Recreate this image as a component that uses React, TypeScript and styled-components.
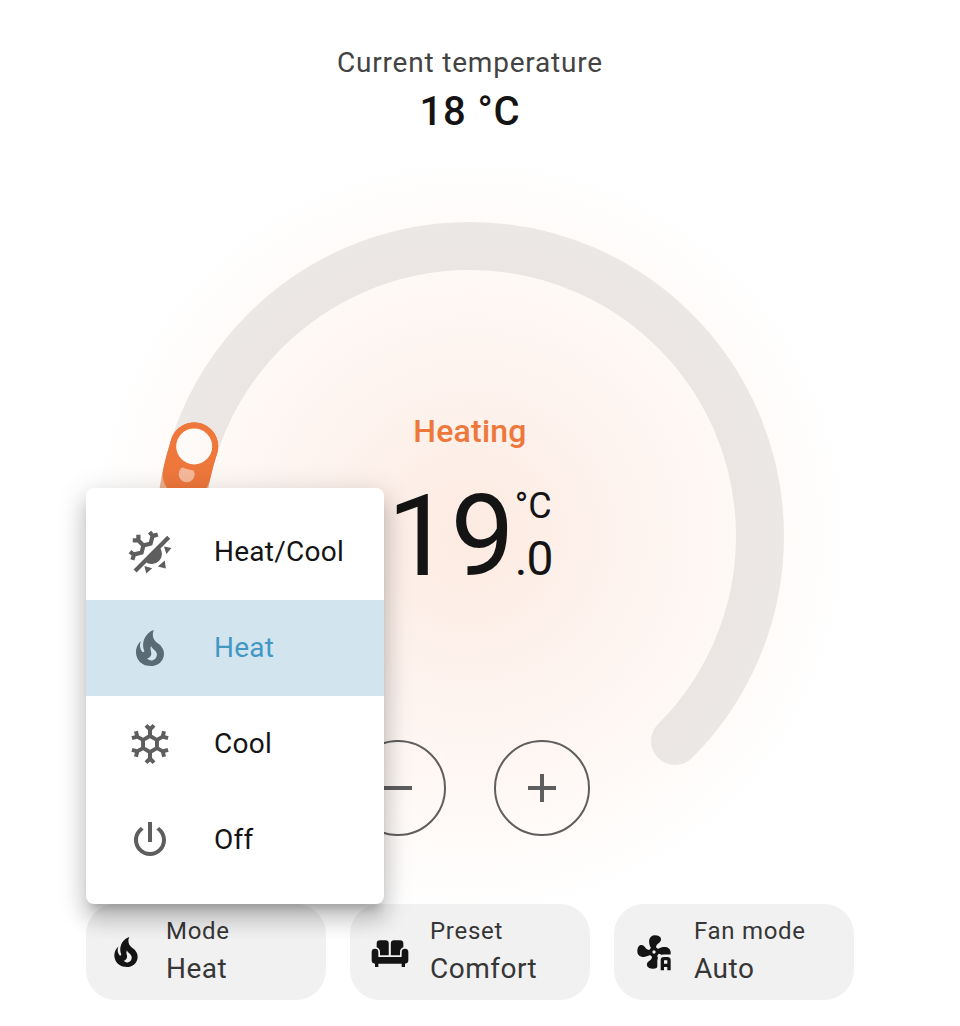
import React from "react";
import styled, { createGlobalStyle, css } from "styled-components";

const GlobalStyle = createGlobalStyle`
  * { box-sizing: border-box; }
  body {
    margin: 0;
    background: #fff;
    font-family: Roboto, "Liberation Sans", sans-serif;
    color: #141414;
    overflow: hidden;
  }
`;

const icons = {
  fire: "M17.66 11.2C17.43 10.9 17.15 10.64 16.89 10.38C16.22 9.78 15.46 9.35 14.82 8.72C13.33 7.26 13 4.85 13.95 3C13 3.23 12.17 3.75 11.46 4.32C8.87 6.4 7.85 10.07 9.07 13.22C9.11 13.32 9.15 13.42 9.15 13.55C9.15 13.77 9 13.97 8.8 14.05C8.57 14.15 8.33 14.09 8.14 13.93C8.08 13.88 8.04 13.83 8 13.76C6.87 12.33 6.69 10.28 7.45 8.64C5.78 10 4.87 12.3 5 14.47C5.06 14.97 5.12 15.47 5.29 15.97C5.43 16.57 5.7 17.17 6 17.7C7.08 19.43 8.95 20.67 10.96 20.92C13.1 21.19 15.39 20.8 17.03 19.32C18.86 17.66 19.5 15 18.56 12.72L18.43 12.46C18.22 12 17.66 11.2 17.66 11.2M14.5 17.5C14.22 17.74 13.76 18 13.4 18.1C12.28 18.5 11.16 17.94 10.5 17.28C11.69 17 12.4 16.12 12.61 15.23C12.78 14.43 12.46 13.77 12.33 13C12.21 12.26 12.23 11.63 12.5 10.94C12.69 11.32 12.89 11.7 13.13 12C13.9 13 15.11 13.44 15.37 14.8C15.41 14.94 15.43 15.08 15.43 15.23C15.46 16.05 15.1 16.95 14.5 17.5Z",
  snowflake:
    "M20.79,13.95L18.46,14.57L16.46,13.44V10.56L18.46,9.43L20.79,10.05L21.31,8.12L19.54,7.65L20,5.88L18.07,5.36L17.45,7.69L15.45,8.82L13,7.38V5.12L14.71,3.41L13.29,2L12,3.29L10.71,2L9.29,3.41L11,5.12V7.38L8.5,8.82L6.5,7.69L5.92,5.36L4,5.88L4.47,7.65L2.7,8.12L3.22,10.05L5.55,9.43L7.55,10.56V13.45L5.55,14.58L3.22,13.96L2.7,15.89L4.47,16.36L4,18.12L5.93,18.64L6.55,16.31L8.55,15.18L11,16.62V18.88L9.29,20.59L10.71,22L12,20.71L13.29,22L14.7,20.59L13,18.88V16.62L15.5,15.17L17.5,16.3L18.12,18.63L20,18.12L19.53,16.35L21.3,15.88L20.79,13.95M9.5,10.56L12,9.11L14.5,10.56V13.44L12,14.89L9.5,13.44V10.56Z",
  power:
    "M16.56,5.44L15.11,6.89C16.84,7.94 18,9.83 18,12A6,6 0 0,1 12,18A6,6 0 0,1 6,12C6,9.83 7.16,7.94 8.88,6.88L7.44,5.44C5.36,6.88 4,9.28 4,12A8,8 0 0,0 12,20A8,8 0 0,0 20,12C20,9.28 18.64,6.88 16.56,5.44M13,3H11V13H13",
  sofa: "M6 5H9.25A2 2 0 0 1 11.25 7V14H6V12C6 10.5 5.2 9.5 4 9.1V7A2 2 0 0 1 6 5ZM18 5H14.5A2 2 0 0 0 12.5 7V14H18V12C18 10.5 18.8 9.5 20 9.1V7A2 2 0 0 0 18 5ZM3 10A2 2 0 0 1 5 12V15H19V12A2 2 0 0 1 23 12V17A2 2 0 0 1 21 19V21H19V19H5V21H3V19A2 2 0 0 1 1 17V12A2 2 0 0 1 3 10Z",
  fan: "M12,11A1,1 0 0,0 11,12A1,1 0 0,0 12,13A1,1 0 0,0 13,12A1,1 0 0,0 12,11M12.5,2C17,2 17.11,5.57 14.75,6.75C13.76,7.24 13.32,8.29 13.13,9.22C13.61,9.42 14.03,9.73 14.35,10.13C18.05,8.13 22.03,8.92 22.03,12.5C22.03,17 18.46,17.1 17.28,14.73C16.78,13.74 15.72,13.3 14.79,13.11C14.59,13.59 14.28,14 13.88,14.34C15.87,18.03 15.08,22 11.5,22C7,22 6.91,18.42 9.27,17.24C10.25,16.75 10.69,15.71 10.89,14.79C10.4,14.59 9.97,14.27 9.65,13.87C5.96,15.85 2,15.07 2,11.5C2,7 5.56,6.89 6.74,9.26C7.24,10.25 8.29,10.68 9.22,10.87C9.41,10.39 9.73,9.97 10.14,9.65C8.15,5.96 8.94,2 12.5,2Z",
  autoBadge:
    "M18 15H20A2 2 0 0 1 22 17V23H20V21H18V23H16V17A2 2 0 0 1 18 15M18 17V19H20V17H18Z",
  plus: "M19,13H13V19H11V13H5V11H11V5H13V11H19V13Z",
  minus: "M19,13H5V11H19V13Z",
};

const Svg = styled.svg<{ $size: number }>`
  display: block;
  flex: none;
  width: ${(p) => p.$size}px;
  height: ${(p) => p.$size}px;
  fill: currentColor;
`;

const Icon = ({ d, size }: { d: string; size: number }) => (
  <Svg $size={size} viewBox="0 0 24 24">
    <path d={d} fillRule="evenodd" />
  </Svg>
);

const FanAutoIcon = ({ size }: { size: number }) => (
  <Svg $size={size} viewBox="0 0 24 24">
    <mask id="fan-cut">
      <rect width="24" height="24" fill="#fff" />
      <path d="M14 24V17A3.6 3.6 0 0 1 17.6 13.5H24V24Z" fill="#000" />
    </mask>
    <path d={icons.fan} fillRule="evenodd" mask="url(#fan-cut)" />
    <path d={icons.autoBadge} fillRule="evenodd" />
  </Svg>
);

const SunSnowflakeIcon = ({ size }: { size: number }) => (
  <Svg $size={size} viewBox="0 0 24 24">
    <path d="M20.6 3.9L22.1 5.4L5.3 22.2L3.8 20.7Z" />
    <path d="M16.7 9.5A5.1 5.1 0 0 1 9.5 16.7Z" />
    <path d="M19 9.2L22.7 10L20.2 13ZM19.4 16.2L19.9 20.2L15.9 19.3ZM9.2 19L13.1 20.1L10.1 22.7Z" />
    <path
      d="M4.2 13.2L7.8 12.3L8.7 8.7L12.3 7.8L13.2 4.3M8.7 8.7L6 6M6.2 3.4V6.2H3.4M11.8 2L13.4 4L15.9 3.2M2 11.8L4 13.4L3.2 15.9"
      fill="none"
      stroke="currentColor"
      strokeWidth="2.1"
    />
  </Svg>
);

const Page = styled.main`
  position: relative;
  width: 960px;
  height: 1026px;
  padding: 45px 106px 0 86px;
  display: flex;
  flex-direction: column;
`;

const Current = styled.header`
  height: 171px;
  display: flex;
  flex-direction: column;
  align-items: center;
`;

const CurrentLabel = styled.div`
  font-size: 28px;
  line-height: 36px;
  letter-spacing: 0.8px;
  color: #434343;
`;

const CurrentValue = styled.div`
  margin-top: 7px;
  font-size: 40px;
  line-height: 48px;
  font-weight: 500;
  letter-spacing: 0.8px;
`;

const Dial = styled.section`
  display: grid;
  width: 640px;
  height: 640px;
  align-self: center;
  & > * {
    grid-area: 1 / 1;
  }
`;

const DialArt = styled.svg`
  display: block;
  width: 640px;
  height: 640px;
  overflow: visible;
`;

const DialContent = styled.div`
  z-index: 1;
  display: flex;
  flex-direction: column;
  align-items: center;
  padding: 193px 0 20px;
`;

const Action = styled.div`
  font-size: 32px;
  line-height: 44px;
  font-weight: 500;
  letter-spacing: 0.2px;
  color: #ee773c;
`;

const Target = styled.div`
  display: flex;
  margin-top: 23px;
  height: 120px;
`;

const TargetWhole = styled.div`
  font-size: 114px;
  line-height: 120px;
  letter-spacing: -0.8px;
`;

const TargetSide = styled.div`
  display: flex;
  flex-direction: column;
  margin-left: 1px;
`;

const Unit = styled.span`
  font-size: 36px;
  line-height: 44px;
  margin-top: 8px;
`;

const Fraction = styled.span`
  font-size: 48px;
  line-height: 56px;
  letter-spacing: -0.8px;
  margin-top: 3px;
`;

const Steppers = styled.div`
  display: flex;
  gap: 48px;
  margin-top: auto;
`;

const StepButton = styled.button`
  display: flex;
  align-items: center;
  justify-content: center;
  width: 96px;
  height: 96px;
  padding: 0;
  border: 2px solid #5e5e5e;
  border-radius: 50%;
  background: none;
  color: #5e5e5e;
`;

const Chips = styled.div`
  display: flex;
  gap: 24px;
  margin-top: 48px;
`;

const Chip = styled.button`
  display: flex;
  align-items: center;
  gap: 20px;
  width: 240px;
  height: 96px;
  padding: 0 20px;
  border: 0;
  border-radius: 30px;
  background: #f1f1f1;
  color: #141414;
  font-family: inherit;
  text-align: left;
`;

const ChipText = styled.span`
  display: flex;
  flex-direction: column;
  color: #363636;
`;

const ChipLabel = styled.span`
  font-size: 24px;
  line-height: 32px;
  letter-spacing: 0.7px;
`;

const ChipValue = styled.span`
  margin-top: 2px;
  font-size: 28px;
  line-height: 40px;
  letter-spacing: 0.5px;
`;

const Menu = styled.ul`
  position: absolute;
  z-index: 2;
  left: 86px;
  top: 488px;
  width: 298px;
  height: 416px;
  margin: 0;
  padding: 16px 0;
  list-style: none;
  border-radius: 8px;
  background: #fff;
  box-shadow:
    0 10px 10px -6px rgba(0, 0, 0, 0.2),
    0 16px 20px 2px rgba(0, 0, 0, 0.14),
    0 6px 28px 4px rgba(0, 0, 0, 0.12);
`;

const MenuItem = styled.li<{ $selected?: boolean }>`
  display: flex;
  align-items: center;
  gap: 40px;
  height: 96px;
  padding-left: 40px;
  font-size: 28px;
  letter-spacing: 0.25px;
  color: #141414;
  svg {
    color: #5e5e5e;
  }
  ${(p) =>
    p.$selected &&
    css`
      background: #d2e5ef;
      color: #4298c5;
      svg {
        color: #5a6b75;
      }
    `}
`;

const MenuLabel = styled.span`
  padding-bottom: 2px;
`;

const CENTER = 320;
const RADIUS = 290;
const at = (deg: number) => {
  const a = (deg * Math.PI) / 180;
  return [CENTER + RADIUS * Math.cos(a), CENTER + RADIUS * Math.sin(a)];
};
const arc = (from: number, to: number) => {
  const [x1, y1] = at(from);
  const [x2, y2] = at(to);
  return `M${x1} ${y1}A${RADIUS} ${RADIUS} 0 ${to - from > 180 ? 1 : 0} 1 ${x2} ${y2}`;
};

const TARGET_ANGLE = 198;
const CURRENT_ANGLE = 192.3;

const DialGraphic = () => {
  const [hx, hy] = at(TARGET_ANGLE);
  const [cx, cy] = at(CURRENT_ANGLE);
  return (
    <DialArt viewBox="0 0 640 640">
      <defs>
        <radialGradient id="glow">
          <stop offset="0" stopColor="#ee773c" stopOpacity="0.15" />
          <stop offset="1" stopColor="#ee773c" stopOpacity="0" />
        </radialGradient>
      </defs>
      <g fill="none" strokeWidth="48" strokeLinecap="round">
        <path d={arc(135, 405)} stroke="#bdbdbd" strokeOpacity="0.3" />
        <path d={arc(135, TARGET_ANGLE)} stroke="#ee773c" strokeOpacity="0.5" />
        <path d={arc(CURRENT_ANGLE, TARGET_ANGLE)} stroke="#ee773c" />
      </g>
      <circle cx={cx} cy={cy} r="8" fill="#fff" fillOpacity="0.5" />
      <circle cx={hx} cy={hy} r="24" fill="#ee773c" />
      <circle cx={hx} cy={hy} r="18" fill="#fff" />
      <circle cx={CENTER} cy={CENTER} r="384" fill="url(#glow)" />
    </DialArt>
  );
};

export default function App() {
  return (
    <>
      <GlobalStyle />
      <Page>
        <Current>
          <CurrentLabel>Current temperature</CurrentLabel>
          <CurrentValue>18 °C</CurrentValue>
        </Current>
        <Dial>
          <DialGraphic />
          <DialContent>
            <Action>Heating</Action>
            <Target>
              <TargetWhole>19</TargetWhole>
              <TargetSide>
                <Unit>°C</Unit>
                <Fraction>.0</Fraction>
              </TargetSide>
            </Target>
            <Steppers>
              <StepButton aria-label="Decrease">
                <Icon d={icons.minus} size={48} />
              </StepButton>
              <StepButton aria-label="Increase">
                <Icon d={icons.plus} size={48} />
              </StepButton>
            </Steppers>
          </DialContent>
        </Dial>
        <Chips>
          <Chip>
            <Icon d={icons.fire} size={40} />
            <ChipText>
              <ChipLabel>Mode</ChipLabel>
              <ChipValue>Heat</ChipValue>
            </ChipText>
          </Chip>
          <Chip>
            <Icon d={icons.sofa} size={40} />
            <ChipText>
              <ChipLabel>Preset</ChipLabel>
              <ChipValue>Comfort</ChipValue>
            </ChipText>
          </Chip>
          <Chip>
            <FanAutoIcon size={40} />
            <ChipText>
              <ChipLabel>Fan mode</ChipLabel>
              <ChipValue>Auto</ChipValue>
            </ChipText>
          </Chip>
        </Chips>
        <Menu>
          <MenuItem>
            <SunSnowflakeIcon size={48} />
            <MenuLabel>Heat/Cool</MenuLabel>
          </MenuItem>
          <MenuItem $selected>
            <Icon d={icons.fire} size={48} />
            <MenuLabel>Heat</MenuLabel>
          </MenuItem>
          <MenuItem>
            <Icon d={icons.snowflake} size={48} />
            <MenuLabel>Cool</MenuLabel>
          </MenuItem>
          <MenuItem>
            <Icon d={icons.power} size={48} />
            <MenuLabel>Off</MenuLabel>
          </MenuItem>
        </Menu>
      </Page>
    </>
  );
}
